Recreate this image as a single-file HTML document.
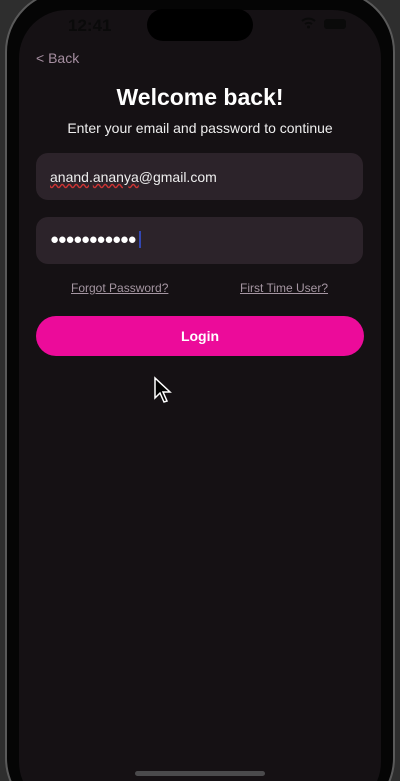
<!DOCTYPE html>
<html style="width:400px;height:781px;overflow:hidden"><head><style>
body{margin:0;width:400px;height:781px;overflow:hidden;background:#2e2e2e;font-family:"Liberation Sans",sans-serif;position:relative}
.frame{position:absolute;left:5px;top:-10px;width:390px;height:830px;border-radius:62px;background:#050505;border:2px solid #5a5a5a;box-sizing:border-box}
.screen{position:absolute;left:19px;top:10px;width:362px;height:800px;border-radius:48px;background:#151114;overflow:hidden}
.island{position:absolute;left:147px;top:9px;width:106px;height:32px;border-radius:16px;background:#000}
.abs{position:absolute}
.field{position:absolute;left:36px;width:327px;height:47px;border-radius:12px;background:#2c232a}
</style></head><body>
<div class="frame"></div>
<div class="screen"></div>
<div class="island"></div>
<div class="abs" style="left:68px;top:16px;font-size:17px;font-weight:bold;color:#0a0a0a">12:41</div>
<svg class="abs" style="left:300px;top:16px" width="50" height="14"><path d="M2 5a10 10 0 0 1 13 0M5 8a6 6 0 0 1 7 0" stroke="#0a0a0a" stroke-width="2" fill="none"/><circle cx="8.5" cy="11" r="1.5" fill="#0a0a0a"/><rect x="24" y="3" width="22" height="10" rx="3" fill="#0a0a0a"/></svg>
<div class="abs" style="left:36px;top:50px;font-size:14px;color:#a58ea0">&lt; Back</div>
<div class="abs" style="left:0;width:400px;top:84px;text-align:center;font-size:23px;font-weight:bold;color:#fff">Welcome back!</div>
<div class="abs" style="left:0;width:400px;top:120px;text-align:center;font-size:14px;color:#eee">Enter your email and password to continue</div>
<div class="field" style="top:153px"></div>
<div class="abs" style="left:50px;top:169px;font-size:14px;color:#eee"><span style="text-decoration:underline wavy #c33;">anand</span>.<span style="text-decoration:underline wavy #c33;">ananya</span>@gmail.com</div>
<div class="field" style="top:217px"></div>
<div class="abs" style="left:50px;top:231px;font-size:15px;color:#fff;letter-spacing:-1.3px">●●●●●●●●●●●</div>
<div class="abs" style="left:139px;top:231px;width:2px;height:17px;background:#3347b3"></div>
<div class="abs" style="left:71px;top:281px;font-size:12px;color:#a596a2;text-decoration:underline">Forgot Password?</div>
<div class="abs" style="left:240px;top:281px;font-size:12px;color:#a596a2;text-decoration:underline">First Time User?</div>
<div class="abs" style="left:36px;top:316px;width:328px;height:40px;border-radius:20px;background:#ec0b9a;color:#fff;font-weight:bold;font-size:14px;text-align:center;line-height:40px">Login</div>
<svg class="abs" style="left:153px;top:376px" width="20" height="30"><path d="M2 2v20l5-5 4 9 3-1-4-9h7z" fill="#000" stroke="#fff" stroke-width="1.5"/></svg>
<div class="abs" style="left:135px;top:771px;width:130px;height:5px;border-radius:3px;background:#4a4a4c"></div>
</body></html>
